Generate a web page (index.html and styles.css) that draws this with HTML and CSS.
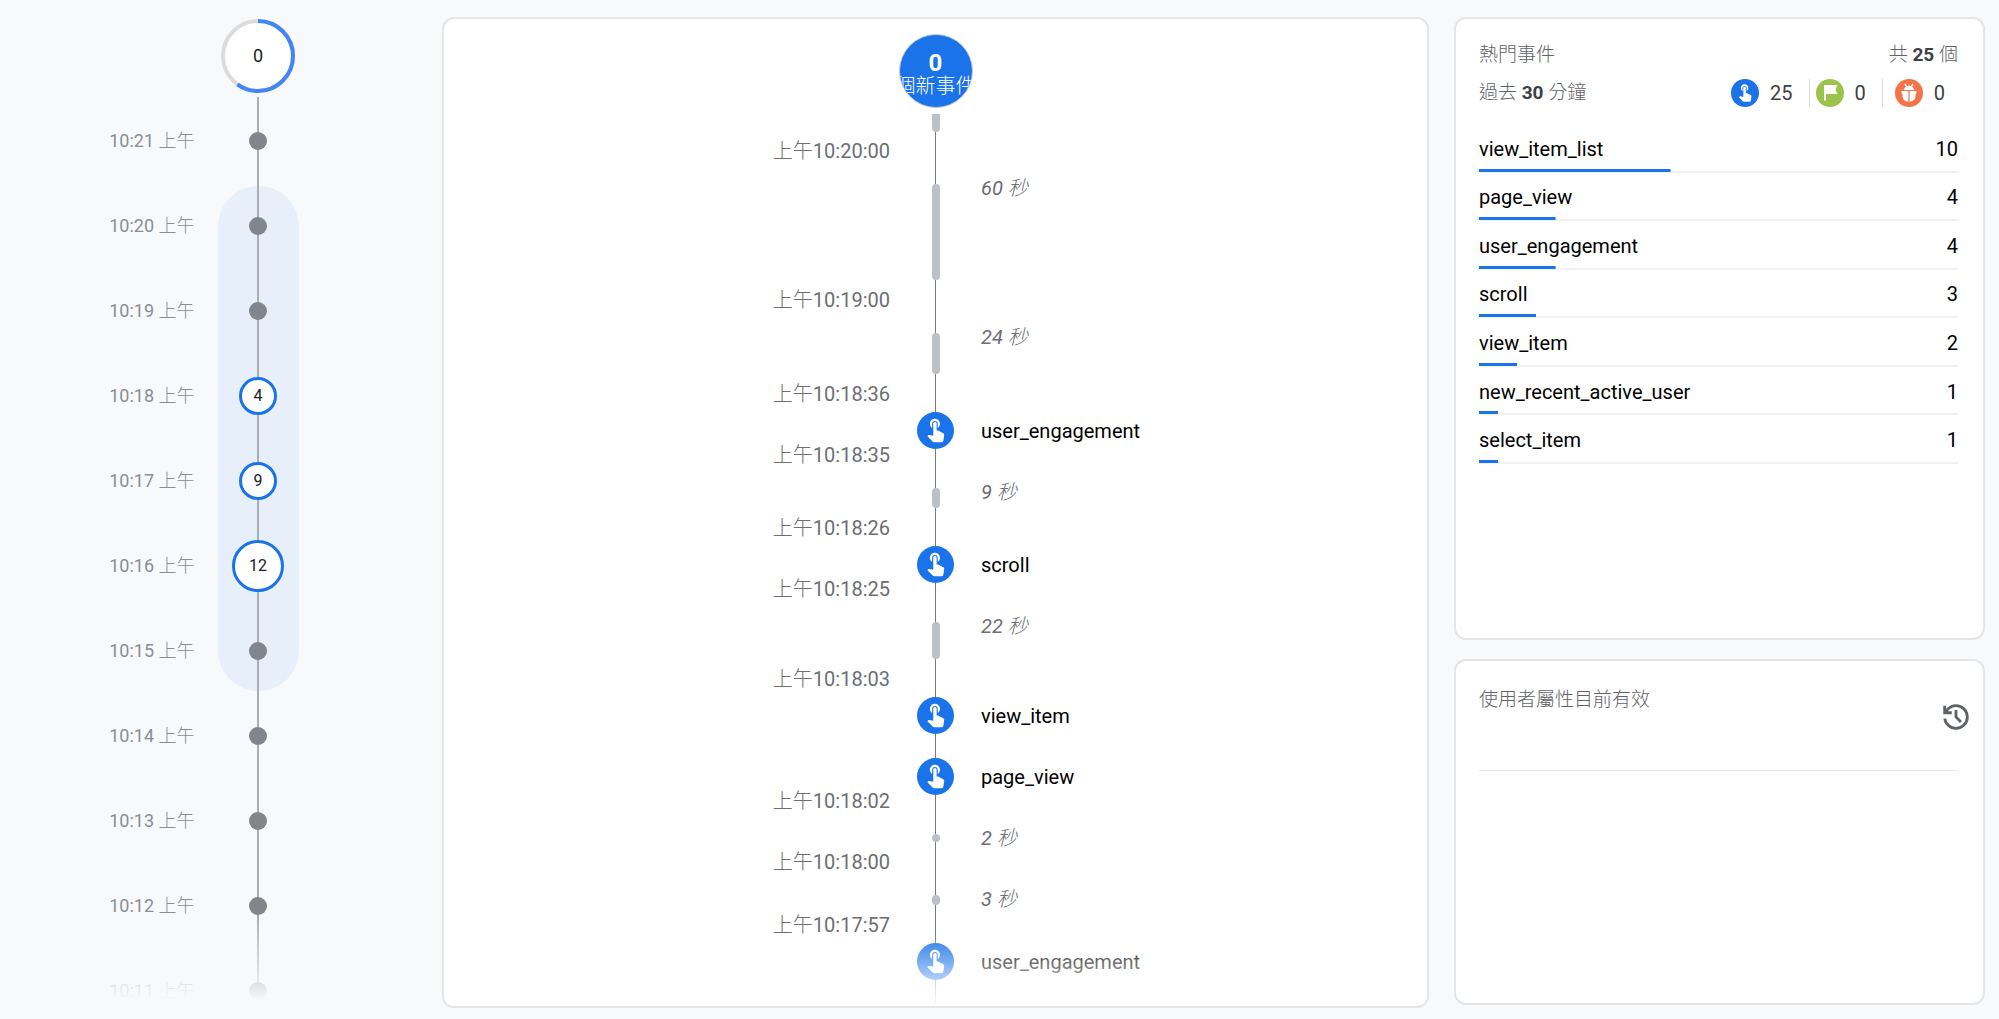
FILE: index.html
```html
<!DOCTYPE html>
<html lang="zh-Hant">
<head>
    <meta charset="UTF-8">
    <meta name="viewport" content="width=device-width, initial-scale=1.0">
    <title>DebugView</title>
    <link rel="stylesheet" href="styles.css">
</head>
<body>
    <svg class="sprite" aria-hidden="true">
        <symbol id="touch" viewBox="0 1.5 24 24">
            <path d="M9 11.24V7.5C9 6.12 10.12 5 11.5 5S14 6.12 14 7.5v3.74c1.21-.81 2-2.18 2-3.74C16 5.01 13.99 3 11.5 3S7 5.01 7 7.5c0 1.56.79 2.93 2 3.74zm9.84 4.63l-4.54-2.26c-.17-.07-.35-.11-.54-.11H13v-6c0-.83-.67-1.5-1.5-1.5S10 6.67 10 7.5v10.74l-3.43-.72c-.08-.01-.15-.03-.24-.03-.31 0-.59.13-.79.33l-.79.8 4.94 4.94c.27.27.65.44 1.06.44h6.79c.75 0 1.33-.55 1.44-1.28l.75-5.27c.01-.07.02-.14.02-.2 0-.62-.38-1.16-.91-1.38z"/>
        </symbol>
        <symbol id="flag" viewBox="0 0 28 28">
            <path d="M8 6h13.500l-2 4.500 2 4.500H10v6.500H8z"/>
        </symbol>
        <symbol id="bug" viewBox="0 0 28 28">
            <path d="M9.300 5.500l1.200-.8 1.700 2.200a6 6 0 0 1 3.600 0l1.700-2.200 1.200.8-1.500 2.300a5 5 0 0 1 2 3.200H8.800a5 5 0 0 1 2-3.200zM6.500 12h6.900v10.500c-3.400 0-5.900-2-5.900-5.500v-2.500H6.500zM14.600 12h6.900v2.500H20.500v2.500c0 3.500-2.500 5.500-5.900 5.500z"/>
        </symbol>
    </svg>

    <div class="page">
        <!-- minutes -->
        <aside class="minutes">
            <div class="ring">
                <svg viewBox="0 0 74 74" aria-hidden="true">
                    <circle class="ring-track" cx="37" cy="37" r="35"/>
                    <circle class="ring-value" cx="37" cy="37" r="35" pathLength="100" transform="rotate(-90 37 37)"/>
                </svg>
                <span>0</span>
            </div>
            <div class="minute-list">
                <div class="minute"><time>10:21 上午</time><span class="dot"></span></div>
                <div class="selected">
                    <div class="minute"><time>10:20 上午</time><span class="dot"></span></div>
                    <div class="minute"><time>10:19 上午</time><span class="dot"></span></div>
                    <div class="minute"><time>10:18 上午</time><span class="count">4</span></div>
                    <div class="minute"><time>10:17 上午</time><span class="count">9</span></div>
                    <div class="minute"><time>10:16 上午</time><span class="count large">12</span></div>
                    <div class="minute"><time>10:15 上午</time><span class="dot"></span></div>
                </div>
                <div class="minute"><time>10:14 上午</time><span class="dot"></span></div>
                <div class="minute"><time>10:13 上午</time><span class="dot"></span></div>
                <div class="minute"><time>10:12 上午</time><span class="dot"></span></div>
                <div class="minute"><time>10:11 上午</time><span class="dot"></span></div>
            </div>
        </aside>

        <!-- seconds -->
        <main class="card stream">
            <div class="new-events"><strong>0</strong><span>個新事件</span></div>
            <div class="timeline">
                <div class="row first"><i class="bar"></i></div>
                <div class="row gap"><time>上午10:20:00</time><i class="bar" style="height: 96px"></i><em>60 秒</em></div>
                <div class="row gap"><time>上午10:19:00</time><i class="bar" style="height: 41px"></i><em>24 秒</em></div>
                <div class="row"><time>上午10:18:36</time><span class="badge"><svg><use href="#touch"/></svg></span><span class="name">user_engagement</span></div>
                <div class="row gap"><time>上午10:18:35</time><i class="bar" style="height: 20px"></i><em>9 秒</em></div>
                <div class="row"><time>上午10:18:26</time><span class="badge"><svg><use href="#touch"/></svg></span><span class="name">scroll</span></div>
                <div class="row gap"><time>上午10:18:25</time><i class="bar" style="height: 37px"></i><em>22 秒</em></div>
                <div class="row"><time>上午10:18:03</time><span class="badge"><svg><use href="#touch"/></svg></span><span class="name">view_item</span></div>
                <div class="row"><span class="badge"><svg><use href="#touch"/></svg></span><span class="name">page_view</span></div>
                <div class="row gap"><time>上午10:18:02</time><i class="bar" style="height: 8px"></i><em>2 秒</em></div>
                <div class="row gap"><time>上午10:18:00</time><i class="bar" style="height: 10px"></i><em>3 秒</em></div>
                <div class="row last"><time>上午10:17:57</time><span class="badge"><svg><use href="#touch"/></svg></span><span class="name">user_engagement</span></div>
            </div>
        </main>

        <div class="side">
            <section class="card top-events">
                <header class="line">
                    <h2>熱門事件</h2>
                    <span>共 <b>25</b> 個</span>
                </header>
                <div class="line">
                    <span class="period">過去 <b>30</b> 分鐘</span>
                    <div class="totals">
                        <span class="total"><span class="badge"><svg><use href="#touch"/></svg></span>25</span>
                        <span class="total"><span class="badge green"><svg><use href="#flag"/></svg></span>0</span>
                        <span class="total"><span class="badge orange"><svg><use href="#bug"/></svg></span>0</span>
                    </div>
                </div>
                <table>
                    <tr style="--share: 40%"><td>view_item_list</td><td>10</td></tr>
                    <tr style="--share: 16%"><td>page_view</td><td>4</td></tr>
                    <tr style="--share: 16%"><td>user_engagement</td><td>4</td></tr>
                    <tr style="--share: 12%"><td>scroll</td><td>3</td></tr>
                    <tr style="--share: 8%"><td>view_item</td><td>2</td></tr>
                    <tr style="--share: 4%"><td>new_recent_active_user</td><td>1</td></tr>
                    <tr style="--share: 4%"><td>select_item</td><td>1</td></tr>
                </table>
            </section>

            <section class="card properties">
                <header>
                    <h2>使用者屬性目前有效</h2>
                    <button type="button" class="history" aria-label="記錄">
                        <svg viewBox="0 -960 960 960"><path d="M480-120q-138 0-240.500-91.500T122-440h82q14 104 92.500 172T480-200q117 0 198.500-81.500T760-480q0-117-81.500-198.500T480-760q-69 0-129 32t-101 88h110v80H120v-240h80v94q51-64 124.500-99T480-840q75 0 140.500 28.500t114 77q48.500 48.500 77 114T840-480q0 75-28.500 140.500t-77 114q-48.500 48.500-114 77T480-120Zm112-192L440-464v-216h80v184l128 128-56 56Z"/></svg>
                    </button>
                </header>
            </section>
        </div>
    </div>
</body>
</html>
```
FILE: styles.css
```css
* {
    box-sizing: border-box;
}
body {
    margin: 0;
    font-family: Roboto, "Noto Sans CJK TC Light", "Noto Sans CJK TC", sans-serif;
    font-size: 20px;
    line-height: 24px;
    color: #202124;
    background: #f8f9fb;
}
h2 {
    margin: 0;
    font-size: inherit;
    font-weight: 400;
}
.sprite {
    display: none;
}
.page {
    display: grid;
    grid-template-columns: minmax(0, 442fr) minmax(0, 987fr) minmax(0, 556fr);
    height: 100vh;
    padding: 17px 14px 11px 0;
}
.card {
    background: #fff;
    border: 2px solid #e3e5e8;
    border-radius: 12px;
}
.badge {
    display: flex;
    align-items: center;
    justify-content: center;
    width: 37px;
    height: 37px;
    border-radius: 50%;
    background: #1a73e8;
}
.badge svg {
    width: 27px;
    height: 27px;
    fill: #fff;
}

/* minutes */
.minutes {
    margin-bottom: 7px;
    padding: 2px 0 0 74px;
    overflow: hidden;
    position: relative;
}
.minutes::after {
    content: "";
    position: absolute;
    left: 0;
    right: 0;
    bottom: 0;
    z-index: 3;
    height: 86px;
    background: linear-gradient(rgba(248, 249, 251, 0), #f8f9fb);
}
.ring {
    position: relative;
    width: 74px;
    margin: 0 auto 4px;
    line-height: 74px;
    text-align: center;
    font-size: 18px;
}
.ring svg {
    position: absolute;
    inset: 0;
    fill: #fff;
    stroke-width: 4;
}
.ring span {
    position: relative;
}
.ring-track {
    stroke: #dcdcdc;
}
.ring-value {
    fill: none;
    stroke: #4285f4;
    stroke-dasharray: 60 40;
}
.minute-list {
    position: relative;
    padding-top: 1px;
}
.minute-list::before {
    content: "";
    position: absolute;
    top: 0;
    bottom: 0;
    left: calc(50% - 1px);
    width: 2px;
    background: #a9adb2;
    z-index: 1;
}
.minute {
    position: relative;
    z-index: 2;
    display: grid;
    grid-template-columns: 1fr 81px 1fr;
    align-items: center;
    justify-items: center;
    height: 85px;
}
.minute time {
    justify-self: end;
    padding-right: 23px;
    font-size: 18px;
    color: #8a8e92;
    white-space: nowrap;
}
.selected {
    position: relative;
}
.selected::before {
    content: "";
    position: absolute;
    top: 3px;
    bottom: 2px;
    left: calc(50% - 40px);
    width: 81px;
    border-radius: 41px;
    background: #e7effb;
}
.dot {
    width: 18px;
    height: 18px;
    border-radius: 50%;
    background: #80868b;
}
.count {
    width: 38px;
    height: 38px;
    border: 3px solid #1a73e8;
    border-radius: 50%;
    background: #fff;
    font-size: 16px;
    line-height: 32px;
    text-align: center;
}
.count.large {
    width: 52px;
    height: 52px;
    line-height: 46px;
}

/* seconds */
.stream {
    display: flex;
    flex-direction: column;
    padding-top: 15px;
    overflow: hidden;
    position: relative;
}
.stream::after {
    content: "";
    position: absolute;
    left: 0;
    right: 0;
    bottom: 0;
    height: 76px;
    background: linear-gradient(rgba(255, 255, 255, 0), #fff);
}
.new-events {
    display: flex;
    flex-direction: column;
    align-items: center;
    flex: none;
    width: 74px;
    height: 74px;
    margin: 0 auto 6px;
    padding-top: 17px;
    border: 1px solid #c6c9cc;
    border-radius: 50%;
    background: #1a73e8;
    color: #fff;
    overflow: hidden;
    white-space: nowrap;
    line-height: 23px;
}
.new-events strong {
    font-size: 24px;
}
.timeline {
    flex: 1;
    display: flex;
    flex-direction: column;
}
.row {
    display: grid;
    grid-template-columns: 1fr 37px 1fr;
    align-items: start;
    min-height: 61px;
    background: linear-gradient(#77797c, #77797c) center / 1px 100% no-repeat;
}
.row time {
    grid-column: 1;
    justify-self: end;
    margin: -12px 27px 0 0;
    color: #6b6e72;
}
.row .badge {
    grid-column: 2;
    margin-top: 18px;
}
.row .name,
.row em {
    grid-column: 3;
    padding: 25px 0 0 27px;
}
.row .name {
    color: #000;
}
.row em {
    color: #6b6e72;
}
.bar {
    grid-column: 2;
    justify-self: center;
    width: 8px;
    border-radius: 4px;
    background: #bdc1c6;
}
.gap .bar {
    margin: 33px 0 20px;
}
.gap em {
    height: 0;
}
.first {
    min-height: 37px;
}
.first .bar {
    height: 18px;
    border-radius: 0 0 4px 4px;
}
.last {
    flex: 1;
}

/* right column */
.side {
    display: flex;
    flex-direction: column;
    gap: 19px;
    margin: 0 0 3px 25px;
}
.side .card {
    padding: 0 25px 0 23px;
}
.top-events {
    flex: 623 1 0;
}
.properties {
    flex: 344 1 0;
}
.side h2,
.line {
    font-size: 19px;
    color: #5f6368;
}
.line {
    display: flex;
    justify-content: space-between;
    align-items: center;
    height: 28px;
}
.line b {
    font-weight: 700;
    color: #3c4043;
}
.top-events header {
    margin: 22px 0 10px;
}
.totals {
    display: flex;
    font-size: 20px;
    color: #3c4043;
}
.total {
    display: flex;
    align-items: center;
    gap: 11px;
    padding: 0 16px 0 6px;
    border-right: 1px solid #dadce0;
}
.total:last-child {
    padding: 0 13px 0 12px;
    border: 0;
}
.total .badge {
    width: 28px;
    height: 28px;
}
.total .badge svg {
    width: 20px;
    height: 20px;
}
.total .green {
    background: #9bc24a;
}
.total .orange {
    background: #f4744a;
}
.total .green svg,
.total .orange svg {
    width: 28px;
    height: 28px;
}
table {
    width: 100%;
    height: 340px;
    margin-top: 17px;
    border-collapse: collapse;
}
tr {
    background:
        linear-gradient(#1a73e8, #1a73e8) left bottom 1px / var(--share) 3px no-repeat,
        linear-gradient(#eff1f3, #eff1f3) left bottom / 100% 2px no-repeat;
}
td {
    padding: 1px 0 0;
    color: #000;
}
td:last-child {
    text-align: right;
}
.properties header {
    display: flex;
    justify-content: space-between;
    align-items: flex-start;
    height: 110px;
    padding-top: 27px;
    border-bottom: 1px solid #e8eaed;
}
.history {
    width: 34px;
    height: 34px;
    margin: 12px -15px 0 0;
    padding: 0;
    border: 0;
    background: none;
    cursor: pointer;
}
.history svg {
    display: block;
    fill: #5f6368;
}
```
